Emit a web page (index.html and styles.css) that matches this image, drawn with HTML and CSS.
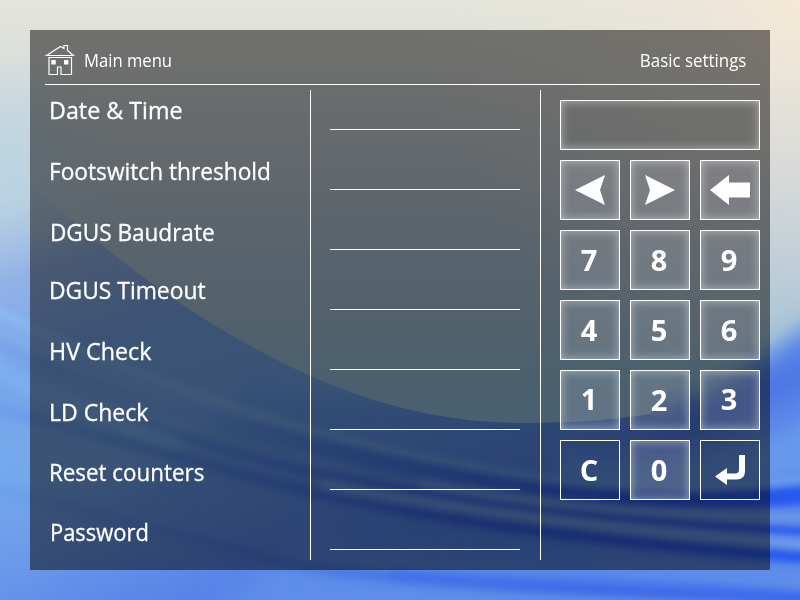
FILE: index.html
```html
<!DOCTYPE html>
<html lang="en">
<head>
<meta charset="utf-8">
<title>Basic settings</title>
<link rel="stylesheet" href="styles.css">
</head>
<body>
<div class="screen">
<svg class="wallpaper" viewBox="0 0 800 600" aria-hidden="true">
  <defs>
    <linearGradient id="sky" x1="0" y1="0" x2="0" y2="1">
      <stop offset="0" stop-color="#e4e5dc"/><stop offset=".1" stop-color="#dbdfdb"/><stop offset=".25" stop-color="#c8d2da"/><stop offset=".4" stop-color="#b4c8d8"/><stop offset=".55" stop-color="#a2c2d8"/><stop offset=".7" stop-color="#90c0e2"/>
    </linearGradient>
    <linearGradient id="wave" gradientUnits="userSpaceOnUse" x1="60" y1="180" x2="200" y2="600">
      <stop offset="0" stop-color="#a4c4ec" stop-opacity="0"/><stop offset=".18" stop-color="#92b2e6"/><stop offset=".38" stop-color="#78a6ea"/><stop offset=".6" stop-color="#74a8ec"/><stop offset=".8" stop-color="#6c9aea"/><stop offset="1" stop-color="#5a84e8"/>
    </linearGradient>
    <linearGradient id="deep" x1="0" y1="0" x2="1" y2="0">
      <stop offset="0" stop-color="#4078e8" stop-opacity="0"/><stop offset=".35" stop-color="#4a80ea" stop-opacity=".3"/><stop offset="1" stop-color="#5088ec" stop-opacity=".7"/>
    </linearGradient>
    <linearGradient id="dark" gradientUnits="userSpaceOnUse" x1="0" y1="0" x2="800" y2="0">
      <stop offset="0" stop-color="#4c80e4" stop-opacity=".2"/><stop offset=".25" stop-color="#4474e0" stop-opacity=".45"/><stop offset=".5" stop-color="#3260de" stop-opacity=".8"/><stop offset=".75" stop-color="#2c56e2" stop-opacity=".95"/><stop offset="1" stop-color="#2658f0"/>
    </linearGradient>
    <linearGradient id="band" gradientUnits="userSpaceOnUse" x1="160" y1="0" x2="800" y2="0">
      <stop offset="0" stop-color="#4678e2" stop-opacity="0"/><stop offset=".35" stop-color="#3f72e2" stop-opacity=".7"/><stop offset=".7" stop-color="#2c5ae4"/><stop offset="1" stop-color="#2658f0"/>
    </linearGradient>
    <linearGradient id="light" gradientUnits="userSpaceOnUse" x1="0" y1="0" x2="800" y2="0">
      <stop offset="0" stop-color="#8cc0f4"/><stop offset=".5" stop-color="#78aeea"/><stop offset="1" stop-color="#6aa2f2"/>
    </linearGradient>
    <radialGradient id="cool" gradientUnits="userSpaceOnUse" cx="0" cy="175" r="125"><stop offset="0" stop-color="#b8d6e6" stop-opacity=".75"/><stop offset="1" stop-color="#b8d6e6" stop-opacity="0"/></radialGradient>
    <radialGradient id="sun" gradientUnits="userSpaceOnUse" cx="800" cy="0" r="380"><stop offset="0" stop-color="#f5e9d6"/><stop offset=".3" stop-color="#f0e6d8" stop-opacity=".6"/><stop offset="1" stop-color="#ece2d4" stop-opacity="0"/></radialGradient>
    <filter id="soft" filterUnits="userSpaceOnUse" x="-60" y="0" width="920" height="700"><feGaussianBlur stdDeviation="3.500"/></filter>
    <filter id="mist" filterUnits="userSpaceOnUse" x="-100" y="0" width="1000" height="760"><feGaussianBlur stdDeviation="11"/></filter>
    <clipPath id="body"><path d="M0 150C60 215 130 270 190 310C330 400 430 422 520 423C580 423 620 419 650 414L720 300H800V600H0Z"/></clipPath>
  </defs>
  <rect width="800" height="600" fill="url(#sky)"/>
  <rect width="800" height="600" fill="url(#sun)"/>
  <rect y="50" width="125" height="250" fill="url(#cool)"/>
  <path d="M0 150C60 215 130 270 190 310C330 400 430 422 520 423C580 423 620 419 650 414L700 440V620H0Z" fill="url(#wave)"/>
  <g clip-path="url(#body)">
    <path d="M-20 640V560C100 530 180 460 250 380C400 412 480 415 530 416C640 414 710 395 750 365L850 300V640Z" fill="url(#deep)" filter="url(#mist)"/>
    <path d="M610 434C690 420 745 385 815 325V640H610Z" fill="#5a84e8" filter="url(#mist)"/>
    <path d="M660 432C720 415 770 390 830 360" fill="none" stroke="#4874e4" stroke-width="24" filter="url(#mist)"/>
    <path d="M560 455C680 475 740 450 830 410V470C760 495 660 496 560 480Z" fill="#669aec" filter="url(#mist)"/>
    <path d="M300 540C470 570 640 575 830 555V620H200Z" fill="#6492ea" opacity=".7" filter="url(#mist)"/>
    <g fill="none" filter="url(#soft)">
      <path d="M-20 312C70 365 190 410 310 444" stroke="#84b4f0" stroke-width="26" opacity=".25"/>
      <path d="M-20 362C50 400 100 415 180 440" stroke="#80bcf8" stroke-width="20" opacity=".35"/>
      <path d="M-20 335C40 365 120 393 190 415" stroke="#5f94e6" stroke-width="9" opacity=".3"/>
      <path d="M160 402C290 444 410 470 540 487C640 502 740 502 830 492" stroke="url(#band)" stroke-width="19"/>
      <path d="M-20 300C60 347 190 394 310 430C370 447 460 466 540 478C630 491 740 492 830 475" stroke="url(#light)" stroke-width="7" opacity=".75"/>
      <path d="M130 417C190 440 240 456 310 472C430 496 570 520 830 533" stroke="url(#dark)" stroke-width="8"/>
      <path d="M-20 405C80 429 180 458 310 492C430 518 600 543 830 559" stroke="url(#dark)" stroke-width="12"/>
      <path d="M320 484C460 510 610 530 830 546" stroke="#76a4e8" stroke-width="9" opacity=".75"/>
      <path d="M420 483C540 506 650 515 830 518" stroke="#74a2e8" stroke-width="8" opacity=".75"/>
      <path d="M-20 486C90 511 180 538 300 566C430 586 600 590 830 600" stroke="url(#dark)" stroke-width="12" opacity=".65"/>
      <path d="M390 572C540 582 680 580 830 597" stroke="#3868f0" stroke-width="8" opacity=".5"/>
    </g>
  </g>
</svg>
<main class="panel">
  <header class="bar">
    <svg class="home" viewBox="0 0 30 32" aria-hidden="true"><path d="M1.500 11.500 15.500 2.500l3.500 2V1.500h3.500v5L28.500 11.500ZM4 13.500V30.500h8.500V23h3.500v7.500h10.500v-17Z"/><path class="solid" d="M6.300 16h4.400v4.400H6.300ZM19 16h4.400v4.400H19Z"/></svg>
    <span class="crumb">Main menu</span><h1 class="title">Basic settings</h1>
  </header>
  <div class="columns">
    <ul class="labels"><li class="date">Date &amp; Time</li><li class="foot">Footswitch threshold</li><li class="baud">DGUS Baudrate</li><li class="timeout">DGUS Timeout</li><li class="hv">HV Check</li><li class="ld">LD Check</li><li class="reset">Reset counters</li><li class="pass">Password</li></ul>
    <div class="values"><i></i><i></i><i></i><i></i><i></i><i></i><i></i><i></i></div>
    <div class="keypad">
      <div class="display"></div>
      <button class="key"><svg viewBox="0 0 58 58"><path d="M14 29 44 14 39 29 44 44Z"/></svg></button>
      <button class="key"><svg viewBox="0 0 58 58"><path d="M44 29 14 14 19 29 14 44Z"/></svg></button>
      <button class="key"><svg viewBox="0 0 58 58"><path d="M9 29 28 14v7.500h21v15H28V44Z"/></svg></button>
      <button class="key">7</button><button class="key">8</button><button class="key">9</button>
      <button class="key">4</button><button class="key">5</button><button class="key">6</button>
      <button class="key high">1</button><button class="key">2</button><button class="key high">3</button>
      <button class="key flat">C</button><button class="key">0</button>
      <button class="key flat"><svg viewBox="0 0 58 58"><path d="M14 35.500 26 27v5.500h8q4 0 4-4V14h6v16q0 8.500-8.500 8.500H26V44Z"/></svg></button>
    </div>
  </div>
</main>
</div>
</body>
</html>
```
FILE: styles.css
```css
* { box-sizing: border-box; margin: 0; padding: 0; }
body { color: #fff; font-family: "Open Sans", sans-serif; }
.screen { position: relative; width: 800px; height: 600px; padding: 30px; overflow: hidden; }
.wallpaper { position: absolute; inset: 0; width: 800px; height: 600px; }
.panel { position: relative; height: 540px; padding: 0 10px 10px 15px; background: rgba(0,0,0,.5); }
.bar { display: flex; align-items: center; height: 55px; padding: 5px 14px 0 0; border-bottom: 1px solid #fff; }
.home { width: 30px; height: 32px; fill: none; stroke: #fff; stroke-width: 1.2; }
.home .solid { fill: #fff; stroke: none; }
.crumb { margin-left: 9px; font-size: 17.5px; transform: scaleX(.95); transform-origin: left; }
.title { margin-left: auto; font-size: 17.5px; font-weight: 400; transform: scaleX(.965); transform-origin: right; }
.columns { display: flex; height: 470px; margin-top: 5px; }
.labels { width: 266px; padding-left: 4px; border-right: 1px solid #fff; list-style: none; font-size: 24px; -webkit-text-stroke: .3px #fff; }
.labels li { height: 61px; line-height: 40px; white-space: nowrap; transform-origin: left; }
.labels .date { transform: scaleX(.97); }
.labels .foot { transform: scaleX(.945); }
.labels .baud { height: 58px; padding-left: 1px; transform: scaleX(.94); }
.labels .timeout { transform: scaleX(.952); }
.labels .hv { transform: scaleX(.97); }
.labels .ld { height: 60px; transform: scaleX(.96); }
.labels .reset { height: 60px; transform: scaleX(.932); }
.labels .pass { height: 40px; padding-left: 1px; transform: scaleX(.915); }
.values { width: 230px; padding: 0 20px 0 19px; border-right: 1px solid #fff; }
.values i { display: block; height: 60px; border-bottom: 1px solid #fff; }
.values i:first-child { height: 40px; }
.keypad { display: grid; grid-template-columns: repeat(3, 60px); grid-template-rows: 50px; grid-auto-rows: 60px; gap: 10px; margin: 10px 0 0 19px; }
.display { grid-column: 1 / -1; border: 1px solid #fff; box-shadow: inset 0 0 10px rgba(255,255,255,.5); }
.key { padding-right: 2px; border: 1px solid #fff; background: rgba(235,235,255,.15); box-shadow: inset 0 0 10px rgba(255,255,255,.48); color: #fff; font: 700 29px/56px "Open Sans", sans-serif; }
.key svg { display: block; width: 58px; height: 58px; fill: #fff; }
.high { padding-bottom: 2px; }
.flat { background: none; box-shadow: none; }
```
